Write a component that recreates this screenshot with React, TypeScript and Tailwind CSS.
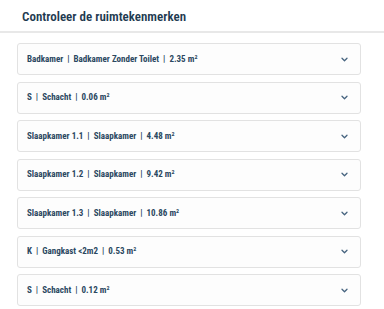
// ─── Data ────────────────────────────────────────────────────────────────────

interface Room {
  code: string;
  name: string;
  area: string;
}

const rooms: Room[] = [
  { code: "Badkamer", name: "Badkamer Zonder Toilet", area: "2.35" },
  { code: "S", name: "Schacht", area: "0.06" },
  { code: "Slaapkamer 1.1", name: "Slaapkamer", area: "4.48" },
  { code: "Slaapkamer 1.2", name: "Slaapkamer", area: "9.42" },
  { code: "Slaapkamer 1.3", name: "Slaapkamer", area: "10.86" },
  { code: "K", name: "Gangkast <2m2", area: "0.53" },
  { code: "S", name: "Schacht", area: "0.12" },
];

function Chevron() {
  return (
    <svg width="7" height="5" viewBox="0 0 7 5" className="text-[#46647f]">
      <polyline points="1,1.2 3.5,3.7 6,1.2" fill="none" stroke="currentColor" strokeWidth="1.3" strokeLinecap="round" strokeLinejoin="round" />
    </svg>
  );
}

function RoomRow({ room }: { room: Room }) {
  return (
    <button className="flex h-[32px] w-full items-center justify-between rounded-[3px] border border-[#e2e2e2] bg-[#fdfdfd] pl-[9px] pr-[12px] text-left">
      <span className="text-[9px] font-bold leading-none text-[#2b4861]">
        {room.code}
        <span className="px-[4px]">|</span>
        {room.name}
        <span className="px-[4px]">|</span>
        {room.area} m<sup className="text-[6px]">2</sup>
      </span>
      <Chevron />
    </button>
  );
}

export default function App() {
  return (
    <div
      className="h-[309px] w-[384px] overflow-hidden bg-white"
      style={{ fontFamily: '"Roboto Condensed", Roboto, sans-serif' }}
    >
      <h1 className="px-[22px] pt-[8px] pb-[5px] text-[13px] font-semibold leading-[18px] text-[#1e3a50]">
        Controleer de ruimtekenmerken
      </h1>
      <div className="h-[2px] bg-[#e8e8e8]" />
      <div className="flex flex-col gap-[6.5px] pl-[17px] pr-[23px] pt-[10px]">
        {rooms.map((room, i) => (
          <RoomRow key={i} room={room} />
        ))}
      </div>
    </div>
  );
}
